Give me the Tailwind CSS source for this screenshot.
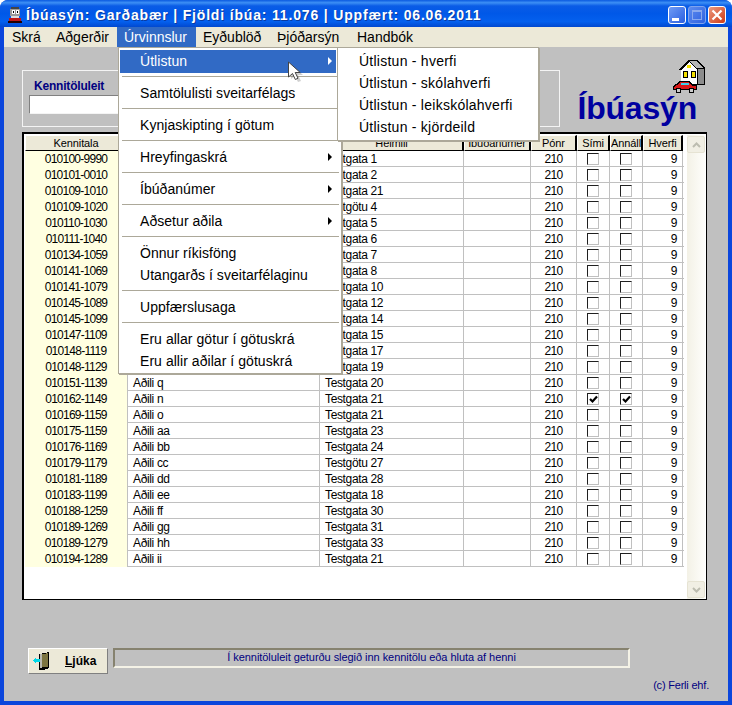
<!DOCTYPE html>
<html lang="en">
<head>
  <meta charset="UTF-8" />
  <title>Íbúasýn</title>
  <script src="https://cdn.jsdelivr.net/npm/@tailwindcss/browser@4"></script>
</head>
<body class="bg-white overflow-hidden">
  <div class="relative w-[732px] h-[705px] font-['Liberation_Sans',sans-serif] text-black flex flex-col">
    <!-- Window frame -->
    <div class="h-[705px] flex flex-col rounded-t-lg bg-[#0b46dc] px-[4px] pb-[4px]">
      <!-- Title bar -->
      <div class="h-[27px] -mx-[4px] rounded-t-lg bg-[linear-gradient(180deg,#0a5ae0_0%,#3c8ff5_10%,#0a5ce6_22%,#0058e8_50%,#0460ee_80%,#0148cf_100%)] flex items-center pt-[3px] pl-[8px] pr-[6px]">
        <svg class="w-[14px] h-[16px] shrink-0" viewBox="0 0 14 16" shape-rendering="crispEdges">
          <rect x="3" y="0" width="8" height="2" fill="#444"/><rect x="2" y="2" width="10" height="7" fill="#999"/>
          <rect x="4" y="3" width="3" height="4" fill="#fff"/><rect x="8" y="3" width="3" height="4" fill="#fff"/>
          <rect x="5" y="4" width="1" height="2" fill="#000"/><rect x="9" y="4" width="1" height="2" fill="#000"/>
          <rect x="3" y="9" width="8" height="2" fill="#ddd"/><rect x="1" y="11" width="12" height="3" fill="#c01818"/>
          <rect x="0" y="14" width="14" height="2" fill="#200"/>
        </svg>
        <span class="ml-[4px] text-white font-bold text-[14px] tracking-[0.83px] whitespace-pre [text-shadow:1px_1px_0_#0a3aa0]">Íbúasýn: Garðabær | Fjöldi íbúa: 11.076 | Uppfært: 06.06.2011</span>
        <div class="ml-auto flex gap-[2px]">
          <div class="w-[18px] h-[18px] rounded-[3px] border border-white bg-[linear-gradient(135deg,#6f9bf5,#2a5fe0)] relative">
            <div class="absolute left-[3px] bottom-[2px] w-[7px] h-[3px] bg-white"></div>
          </div>
          <div class="w-[18px] h-[18px] rounded-[3px] border border-[#7fa3ee] bg-[linear-gradient(135deg,#5c8bef,#2f62e0)] p-[3px]">
            <div class="w-full h-full border border-[#8aa9ee] border-t-2"></div>
          </div>
          <div class="w-[18px] h-[18px] rounded-[3px] border border-white bg-[linear-gradient(135deg,#eb9a80,#cf3a14)] flex items-center justify-center">
            <svg class="w-[12px] h-[12px]" viewBox="0 0 12 12"><path d="M1.5 1.5l9 9M10.5 1.5l-9 9" stroke="#fff" stroke-width="2.2" fill="none"/></svg>
          </div>
        </div>
      </div>

      <!-- Menu bar -->
      <div class="h-[20px] bg-[#ece9d8] flex text-[14px] leading-[20px] shrink-0">
        <span class="pl-[8px] w-[44px]">Skrá</span>
        <span class="pl-[8px] w-[69px]">Aðgerðir</span>
        <span class="pl-[7px] w-[79px] bg-[#316ac5] text-white">Úrvinnslur</span>
        <span class="pl-[7px] w-[77px]">Eyðublöð</span>
        <span class="pl-[4px] w-[80px]">Þjóðarsýn</span>
        <span class="pl-[4px]">Handbók</span>
      </div>

      <!-- Client area -->
      <div class="flex-1 bg-[#c0c0c0] flex flex-col pl-[18px]">
        <div class="flex items-start mt-[13px] h-[67px]">
          <div class="mt-[10px] w-[538px] h-[57px] border border-[#f4f4f4] pl-[6px] pt-[8px] pr-[20px]">
            <div class="text-[12px] leading-[14px] font-bold text-[#000080] pl-[5px] tracking-[-0.2px]">Kennitöluleit</div>
            <div class="mt-[2px] h-[19px] bg-white border border-t-[#808080] border-l-[#808080] border-r-[#f4f4f4] border-b-[#f4f4f4]"></div>
          </div>
          <div class="flex-1 flex flex-col items-end pr-[23px]">
            <!-- house and car -->
            <svg class="w-[33px] h-[33px]" viewBox="0 0 33 33" shape-rendering="crispEdges">
              <path d="M16 0h9l8 8v17H9V10H7z" fill="#000"/>
              <path d="M17 1h7l7 7h-6z" fill="#b5b5b5"/>
              <rect x="26" y="9" width="6" height="15" fill="#8c8c8c"/>
              <path d="M9 10l8-8 8 8v14H9z" fill="#fff"/>
              <path d="M8 10l9-9 9 9h-1l-8-8-8 8z" fill="#000"/>
              <rect x="15" y="5" width="4" height="3" fill="#f4e000"/>
              <rect x="11" y="11" width="5" height="7" fill="#000"/><rect x="12" y="12" width="3" height="5" fill="#f4e000"/>
              <rect x="19" y="11" width="5" height="7" fill="#000"/><rect x="20" y="12" width="3" height="5" fill="#f4e000"/>
              <path d="M7 21h11l3 4h4v5H1v-4l3-2z" fill="#000"/>
              <path d="M8 22h9l3 4h4v3H2v-2l3-2z" fill="#d81818"/>
              <rect x="9" y="23" width="8" height="2" fill="#40d0e8"/>
              <rect x="4" y="28" width="5" height="5" fill="#000"/><rect x="17" y="28" width="5" height="5" fill="#000"/>
              <rect x="5" y="29" width="3" height="3" fill="#ccc"/><rect x="18" y="29" width="3" height="3" fill="#ccc"/>
            </svg>
            <div class="mr-[8px] text-[32px] leading-[33px] font-bold text-[#0000a0] -mt-[1px] tracking-[-0.2px]">Íbúasýn</div>
          </div>
        </div>

        <!-- Table box -->
        <div class="mt-[5px] w-[685px] h-[468px] bg-white border-l-2 border-t-2 border-r border-b border-black flex pl-[1px] pt-[1px]">
          <div class="w-[659px] shrink-0">
            <div id="head" class="grid grid-cols-[103px_192px_144px_67px_46px_33px_33px_40px] h-[16px] text-[11px] leading-[15px] text-center tracking-[-0.1px]"></div>
            <div id="rows"></div>
          </div>
          <!-- Scrollbar -->
          <div class="ml-[3px] w-[18px] h-full bg-[linear-gradient(90deg,#f3f1e6,#fefefb)] flex flex-col justify-between py-[1px]">
            <div class="h-[17px] rounded-[2px] border border-[#e6e3d3] bg-[#f1efe4] flex items-center justify-center">
              <svg class="w-[9px] h-[6px]" viewBox="0 0 9 6"><path d="M1 5l3.5-3.5L8 5" stroke="#bdbdb0" stroke-width="2" fill="none"/></svg>
            </div>
            <div class="h-[17px] rounded-[2px] border border-[#e6e3d3] bg-[#f1efe4] flex items-center justify-center">
              <svg class="w-[9px] h-[6px]" viewBox="0 0 9 6"><path d="M1 1l3.5 3.5L8 1" stroke="#bdbdb0" stroke-width="2" fill="none"/></svg>
            </div>
          </div>
        </div>

        <!-- Footer -->
        <div class="mt-[48px] flex items-start pl-[6px]">
          <div class="w-[80px] h-[26px] bg-[#ece9d8] border border-t-white border-l-white border-r-[#808080] border-b-[#808080] flex items-center pl-[4px] shrink-0">
            <svg class="w-[17px] h-[18px] shrink-0" viewBox="0 0 17 18" shape-rendering="crispEdges">
              <path d="M6 2l10-2v16l-5 2H6z" fill="#000"/>
              <path d="M7 3l8-2v14H7z" fill="#7c7440"/>
              <rect x="7" y="2" width="2" height="14" fill="#b8b8b0"/>
              <path d="M0 8l3-3v2h4v3H3v2z" fill="#00d8e8"/>
            </svg>
            <span class="ml-[15px] text-[12px] font-bold"><span class="underline">L</span>júka</span>
          </div>
          <div class="ml-[5px] w-[517px] h-[20px] border-2 border-t-[#86826f] border-l-[#86826f] border-r-[#f4f2e6] border-b-[#f4f2e6] text-center text-[11px] leading-[14px] text-[#000080] tracking-[-0.05px]">Í kennitöluleit geturðu slegið inn kennitölu eða hluta af henni</div>
        </div>
        <div class="mt-[5px] self-end mr-[19px] text-[11px] leading-[12px] text-[#000080] tracking-[-0.2px]">(c) Ferli ehf.</div>
      </div>
    </div>

    <!-- Úrvinnslur dropdown -->
    <div class="absolute left-[118px] top-[47px] w-[224px] h-[327px] bg-white border border-[#aca899] pl-[1px] pt-[2px] text-[14px] tracking-[0.05px] shadow-[1px_1px_0_#aca899]">
      <div class="relative w-[216px] h-[23px] bg-[#316ac5] text-white pl-[20px] leading-[22px]">Útlistun
        <div class="absolute right-[4px] top-[7px] border-y-[4px] border-y-transparent border-l-[4px] border-l-white"></div>
      </div>
      <div class="mx-[2px] mt-[3px] w-[216px] border-t border-[#aca899]"></div>
      <div class="h-[31px] pl-[20px] pt-[5px] leading-[22px]">Samtölulisti sveitarfélags</div>
      <div class="mx-[2px] w-[216px] border-t border-[#aca899]"></div>
      <div class="h-[31px] pl-[20px] pt-[5px] leading-[22px]">Kynjaskipting í götum</div>
      <div class="mx-[2px] w-[217px] border-t border-[#aca899]"></div>
      <div class="relative h-[31px] pl-[20px] pt-[5px] leading-[22px]">Hreyfingaskrá
        <div class="absolute left-[208px] top-[12px] border-y-[4px] border-y-transparent border-l-[4px] border-l-black"></div>
      </div>
      <div class="mx-[2px] w-[217px] border-t border-[#aca899]"></div>
      <div class="relative h-[31px] pl-[20px] pt-[5px] leading-[22px]">Íbúðanúmer
        <div class="absolute left-[208px] top-[12px] border-y-[4px] border-y-transparent border-l-[4px] border-l-black"></div>
      </div>
      <div class="mx-[2px] w-[217px] border-t border-[#aca899]"></div>
      <div class="relative h-[31px] pl-[20px] pt-[5px] leading-[22px]">Aðsetur aðila
        <div class="absolute left-[208px] top-[12px] border-y-[4px] border-y-transparent border-l-[4px] border-l-black"></div>
      </div>
      <div class="mx-[2px] w-[217px] border-t border-[#aca899]"></div>
      <div class="h-[53px] pl-[20px] pt-[5px] leading-[22px]">Önnur ríkisföng<br>Utangarðs í sveitarfélaginu</div>
      <div class="mx-[2px] w-[217px] border-t border-[#aca899]"></div>
      <div class="h-[31px] pl-[20px] pt-[5px] leading-[22px]">Uppfærslusaga</div>
      <div class="mx-[2px] w-[217px] border-t border-[#aca899]"></div>
      <div class="pl-[20px] pt-[5px] leading-[22px]">Eru allar götur í götuskrá<br>Eru allir aðilar í götuskrá</div>
    </div>

    <!-- Útlistun submenu -->
    <div class="absolute left-[337px] top-[47px] w-[202px] h-[94px] bg-white border border-[#aca899] pl-[21px] pt-[2px] text-[14px] leading-[22px] tracking-[0.25px] shadow-[1px_1px_0_#aca899]">
      <div>Útlistun - hverfi</div>
      <div>Útlistun - skólahverfi</div>
      <div>Útlistun - leikskólahverfi</div>
      <div>Útlistun - kjördeild</div>
    </div>

    <!-- Mouse pointer -->
    <svg class="absolute left-[287px] top-[61px] w-[20px] h-[24px]" viewBox="0 0 20 24">
      <path d="M4 3v15l4-3 3 6 3-1-3-6h5z" fill="#777" opacity=".35"/>
      <path d="M1.5 1v15l4-3.500 2.800 6 2.700-1.300-2.800-5.700h5z" fill="#fff" stroke="#444" stroke-width="1"/>
    </svg>
  </div>

  <script>
    const ids = "010100-9990 010101-0010 010109-1010 010109-1020 010110-1030 010111-1040 010134-1059 010141-1069 010141-1079 010145-1089 010145-1099 010147-1109 010148-1119 010148-1129 010151-1139 010162-1149 010169-1159 010175-1159 010176-1169 010179-1179 010181-1189 010183-1199 010188-1259 010189-1269 010189-1279 010194-1289".split(" ");
    // first 14 names sit under the open menu
    const names = ["","","","","","","","","","","","","","","Aðili q","Aðili n","Aðili o","Aðili aa","Aðili bb","Aðili cc","Aðili dd","Aðili ee","Aðili ff","Aðili gg","Aðili hh","Aðili ii"];
    const streets = ["Testgata 1","Testgata 2","Testgata 21","Testgötu 4","Testgata 5","Testgata 6","Testgata 7","Testgata 8","Testgata 10","Testgata 12","Testgata 14","Testgata 15","Testgata 17","Testgata 19","Testgata 20","Testgata 21","Testgata 21","Testgata 23","Testgata 24","Testgötu 27","Testgata 28","Testgata 18","Testgata 30","Testgata 31","Testgata 33","Testgata 21"];

    // Header cells
    document.getElementById("head").innerHTML = ["Kennitala","","Heimili","Íbúðanúmer","Pónr","Sími","Annáll","Hverfi"]
      .map(t => `<div class="bg-[#ece9d8] border-t border-t-white border-l border-l-white border-r-2 border-r-black border-b border-b-black overflow-hidden whitespace-nowrap">${t}</div>`)
      .join("");

    function box(on) {
      const tick = on ? `<svg class="w-[9px] h-[9px]" viewBox="0 0 9 9"><path d="M1 4l2.500 2.500L8 1.500" stroke="#000" stroke-width="2.200" fill="none"/></svg>` : "";
      return `<div class="flex items-center justify-center border-r border-[#c0c0c0]"><div class="w-[12px] h-[12px] flex items-center justify-center border border-t-[#202020] border-l-[#202020] border-r-[#c0c0c0] border-b-[#c0c0c0]">${tick}</div></div>`;
    }

    // Table rows
    let html = "";
    ids.forEach((id, i) => {
      const on = i === 15;
      html += `<div class="grid grid-cols-[103px_192px_144px_67px_46px_33px_33px_40px] h-[16px] border-b border-[#c0c0c0] text-[12px] leading-[16px] tracking-[-0.35px]">
        <div class="bg-[#ffffe1] border-r border-[#c0c0c0] text-center tracking-[-0.75px]">${id}</div>
        <div class="border-r border-[#c0c0c0] pl-[5px]">${names[i]}</div>
        <div class="border-r border-[#c0c0c0] pl-[5px]">${streets[i]}</div>
        <div class="border-r border-[#c0c0c0]"></div>
        <div class="border-r border-[#c0c0c0] text-center tracking-[-0.7px]">210</div>
        ${box(on)}${box(on)}
        <div class="border-r border-[#c0c0c0] text-right pr-[5px]">9</div>
      </div>`;
    });
    document.getElementById("rows").innerHTML = html;
  </script>
</body>
</html>
